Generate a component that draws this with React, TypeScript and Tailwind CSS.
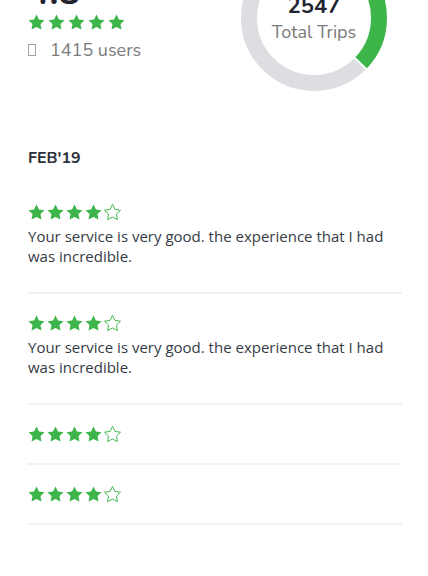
const green = "#3db54a";
const starPath =
  "M12 2l3.09 6.26L22 9.27l-5 4.87 1.18 6.88L12 17.77l-6.18 3.25L7 14.14 2 9.27l6.91-1.01L12 2z";

function Star({ filled }: { filled: boolean }) {
  return (
    <svg width="17" height="16" viewBox="1.5 1.5 21 20" className="shrink-0">
      {filled ? (
        <path d={starPath} fill={green} />
      ) : (
        <path d={starPath} fill="none" stroke={green} strokeWidth="1.2" strokeLinejoin="round" />
      )}
    </svg>
  );
}

function Stars({ count }: { count: number }) {
  return (
    <div className="flex items-center gap-[2px] h-4">
      {[0, 1, 2, 3, 4].map((i) => (
        <Star key={i} filled={i < count} />
      ))}
    </div>
  );
}

const reviews = [
  { id: 1, rating: 4, text: "Your service is very good. the experience that I had was incredible." },
  { id: 2, rating: 4, text: "Your service is very good. the experience that I had was incredible." },
  { id: 3, rating: 4, text: "" },
  { id: 4, rating: 4, text: "" },
];

function Donut() {
  const r = 65;
  const c = 2 * Math.PI * r;
  const pct = 0.37;
  return (
    <div className="relative w-[146px] h-[146px] shrink-0">
      <svg width="146" height="146" viewBox="0 0 146 146">
        <circle cx="73" cy="73" r={r} fill="none" stroke="#dcdee2" strokeWidth="16" />
        <circle
          cx="73"
          cy="73"
          r={r}
          fill="none"
          stroke="#ffffff"
          strokeWidth="17"
          strokeDasharray={`${c * pct + 2} ${c}`}
          transform="rotate(-90 73 73)"
        />
        <circle
          cx="73"
          cy="73"
          r={r}
          fill="none"
          stroke={green}
          strokeWidth="16"
          strokeDasharray={`${c * pct} ${c}`}
          transform="rotate(-90 73 73)"
        />
      </svg>
      <div className="absolute inset-0 flex flex-col items-center justify-center">
        <span className="text-[22px] leading-[28px] font-bold text-[#1f2430]">2547</span>
        <span className="text-[18px] leading-[24px] text-[#7a7a7a]">Total Trips</span>
      </div>
    </div>
  );
}

export default function App() {
  return (
    <div className="w-[428px] h-[576px] overflow-hidden bg-white font-['Nunito','Lato',sans-serif]">
      {/* Header */}
      <div className="-mt-[55px] flex justify-between pl-7 pr-[41px]">
        <div className="flex flex-col mt-[28px]">
          <span className="text-[36px] leading-[40px] font-bold text-[#1f2430]">4.8</span>
          <div className="mt-[1px] flex gap-[3px]">
            {[0, 1, 2, 3, 4].map((i) => (
              <Star key={i} filled />
            ))}
          </div>
          <div className="mt-[8px] flex items-center gap-[14px] text-[18px] leading-[24px] text-[#7b7b7b]">
            <span className="inline-block w-[8px] h-[12px] border border-[#a0a4ae]" />
            <span>1415 users</span>
          </div>
        </div>
        <Donut />
      </div>

      {/* Month */}
      <div className="pl-7 pr-[26px]">
        <h2 className="mt-[55px] text-[16px] leading-[24px] font-bold text-[#2b303b]">FEB'19</h2>

        <div className="mt-[13px] flex flex-col">
          {reviews.map((r) => (
            <div key={r.id} className="pt-[21px] pb-[21px] border-b-2 border-[#f2f2f2]">
              <Stars count={r.rating} />
              {r.text && (
                <p className="mt-[6px] mb-[5px] font-['Open_Sans',sans-serif] text-[15px] leading-[20px] text-[#353b46]">
                  {r.text}
                </p>
              )}
            </div>
          ))}
        </div>
      </div>
    </div>
  );
}
